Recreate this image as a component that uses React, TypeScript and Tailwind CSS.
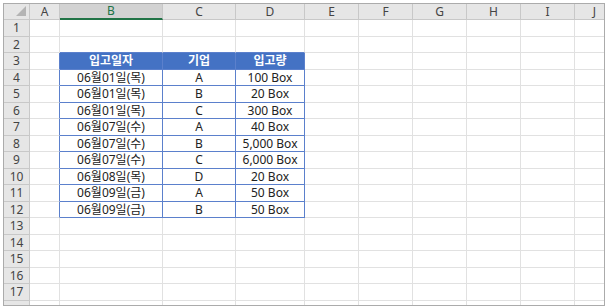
import React from "react";

const cols = [
  { key: "A", w: "w-[30px]" },
  { key: "B", w: "w-[103px]" },
  { key: "C", w: "w-[73px]" },
  { key: "D", w: "w-[69px]" },
  { key: "E", w: "w-[54px]" },
  { key: "F", w: "w-[54px]" },
  { key: "G", w: "w-[54px]" },
  { key: "H", w: "w-[54px]" },
  { key: "I", w: "w-[54px]" },
  { key: "J", w: "w-[40px]" },
];

const data: string[][] = [
  ["06월01일(목)", "A", "100 Box"],
  ["06월01일(목)", "B", "20 Box"],
  ["06월01일(목)", "C", "300 Box"],
  ["06월07일(수)", "A", "40 Box"],
  ["06월07일(수)", "B", "5,000 Box"],
  ["06월07일(수)", "C", "6,000 Box"],
  ["06월08일(목)", "D", "20 Box"],
  ["06월09일(금)", "A", "50 Box"],
  ["06월09일(금)", "B", "50 Box"],
];

const font = { fontFamily: '"Noto Sans", "Noto Sans CJK KR", sans-serif' };

export default function App() {
  const rows = Array.from({ length: 18 }, (_, i) => i + 1);
  return (
    <div className="w-[610px] h-[308px] bg-white pl-[3px] pt-[3px]" style={font}>
      <div className="w-[602px] h-[303px] border border-[#ababab] overflow-hidden">
        <div className="flex h-[16px] shrink-0">
          <div className="w-[26px] shrink-0 bg-[#e6e6e6] border-r border-b border-[#c8c8c8] relative">
            <div className="absolute right-[3px] bottom-[3px] w-0 h-0 border-l-[10px] border-l-transparent border-b-[10px] border-b-[#b4b4b4]" />
          </div>
          {cols.map((c) =>
            c.key === "B" ? (
              <div
                key={c.key}
                className={`${c.w} shrink-0 bg-[#d2d2d2] border-r border-[#c8c8c8] border-b-2 border-b-[#217346] flex items-center justify-center text-[12px] leading-none text-[#217346]`}
              >
                {c.key}
              </div>
            ) : (
              <div
                key={c.key}
                className={`${c.w} shrink-0 bg-[#e6e6e6] border-r border-b border-[#c8c8c8] flex items-center justify-center text-[12px] leading-none text-[#444]`}
              >
                {c.key}
              </div>
            )
          )}
        </div>
        {rows.map((r) => {
          const h = r % 2 === 1 ? "h-[17px]" : "h-[16px]";
          const inTable = r >= 3 && r <= 12;
          return (
            <div key={r} className={`flex ${h} shrink-0`}>
              <div className="w-[26px] shrink-0 bg-[#e6e6e6] border-r border-b border-[#c8c8c8] flex items-center justify-center text-[12px] leading-none text-[#444]">
                {r <= 17 ? r : ""}
              </div>
              {cols.map((c, ci) => {
                const isTableCol = ci >= 1 && ci <= 3;
                let cls = `${c.w} shrink-0 border-r border-b flex items-center justify-center text-[12px] leading-none whitespace-nowrap`;
                const rightBlue = inTable && ci >= 0 && ci <= 3;
                const bottomBlue = r >= 2 && r <= 12 && isTableCol;
                cls += rightBlue ? " border-r-[#5b80cc]" : " border-r-[#e1e1e1]";
                cls += bottomBlue ? " border-b-[#5b80cc]" : " border-b-[#e1e1e1]";
                let content = "";
                if (r === 3 && isTableCol) {
                  cls += " bg-[#4472c4] text-white font-bold";
                  content = ["입고일자", "기업", "입고량"][ci - 1];
                } else if (r >= 4 && r <= 12 && isTableCol) {
                  cls += " text-[#222]";
                  content = data[r - 4][ci - 1];
                }
                return (
                  <div key={c.key} className={cls}>
                    {content}
                  </div>
                );
              })}
            </div>
          );
        })}
      </div>
    </div>
  );
}
